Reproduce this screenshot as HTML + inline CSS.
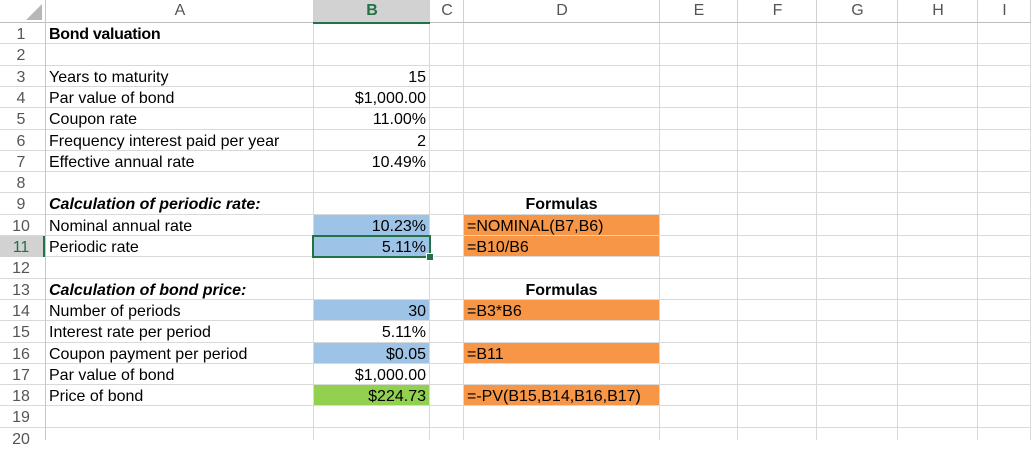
<!DOCTYPE html>
<html><head><meta charset="utf-8"><style>
body{margin:0;width:1031px;height:440px;overflow:hidden;background:#fff;font-family:"Liberation Sans",Arial,sans-serif;position:relative}
.c{position:absolute;box-sizing:border-box;font-size:16px;color:#000;white-space:nowrap;line-height:21px;overflow:visible}
.h{position:absolute;box-sizing:border-box;color:#555;font-size:16px;text-align:center}
.vl{position:absolute;top:0;width:1px;height:440px;background:#d9d9d9}
.hl{position:absolute;left:0;height:1px;width:1031px;background:#d9d9d9}
</style></head><body>
<div id="g"></div>
<script>
var g=document.getElementById('g'),H='';
var cols=[46,314,430,464,660,738,817,898,978,1031],names='ABCDEFGHI';
function rt(r){return 23+(r-1)*21.3;}
function fill(col,r,color){H+='<div style="position:absolute;left:'+cols[col]+'px;top:'+(rt(r))+'px;width:'+(cols[col+1]-cols[col])+'px;height:21.3px;background:'+color+'"></div>';}
var B='#9dc3e6',O='#f79646',G='#92d050';
fill(1,10,B);fill(1,11,B);fill(1,14,B);fill(1,16,B);fill(1,18,G);
fill(3,10,O);fill(3,11,O);fill(3,14,O);fill(3,16,O);fill(3,18,O);
for(var i=0;i<cols.length;i++)H+='<div class="vl" style="left:'+(cols[i]-1)+'px"></div>';
for(var r=1;r<=20;r++)H+='<div class="hl" style="top:'+(rt(r)-1)+'px"></div>';
H+='<div style="position:absolute;left:0;top:0;width:1031px;height:22px;background:#fff;border-bottom:1px solid #bdbdbd"></div>';
H+='<div style="position:absolute;left:0;top:0;width:45px;height:440px;border-right:1px solid #c8c8c8"></div>';
H+='<svg style="position:absolute;left:26px;top:4px" width="16" height="16"><polygon points="16,0 16,16 0,16" fill="#b7b7b7"/></svg>';
H+='<div style="position:absolute;left:313px;top:0;width:117px;height:22px;background:#d2d2d2;border-bottom:2px solid #217346"></div>';
for(var i=0;i<9;i++){H+='<div class="h" style="left:'+cols[i]+'px;top:2px;width:'+(cols[i+1]-cols[i])+'px;'+(i==1?'color:#217346;font-weight:bold':'')+'">'+names[i]+'</div>';H+='<div style="position:absolute;left:'+(cols[i+1]-1)+'px;top:0;width:1px;height:22px;background:#d0d0d0"></div>';}
H+='<div style="position:absolute;left:0;top:'+rt(11)+'px;width:45px;height:21px;background:#d2d2d2;border-right:2px solid #217346;box-sizing:border-box"></div>';
for(var r=1;r<=20;r++)H+='<div class="h" style="left:0;top:'+(rt(r)+1)+'px;width:42px;line-height:21px;'+(r==11?'color:#217346;':'')+'">'+r+'</div>';
function t(col,r,txt,st){var w=cols[col+1]-cols[col];H+='<div class="c" style="left:'+(cols[col]+3)+'px;top:'+(rt(r)+1)+'px;width:'+(w-7)+'px;'+(st||'')+'">'+txt+'</div>';}
var R='text-align:right;';
t(0,1,'Bond valuation','font-weight:bold;letter-spacing:-0.3px');
t(0,3,'Years to maturity');t(1,3,'15',R);
t(0,4,'Par value of bond');t(1,4,'$1,000.00',R);
t(0,5,'Coupon rate');t(1,5,'11.00%',R);
t(0,6,'Frequency interest paid per year');t(1,6,'2',R);
t(0,7,'Effective annual rate');t(1,7,'10.49%',R);
t(0,9,'Calculation of periodic rate:','font-weight:bold;font-style:italic');
t(3,9,'Formulas','font-weight:bold;text-align:center');
t(0,10,'Nominal annual rate');t(1,10,'10.23%',R);t(3,10,'=NOMINAL(B7,B6)');
t(0,11,'Periodic rate');t(1,11,'5.11%',R);t(3,11,'=B10/B6');
t(0,13,'Calculation of bond price:','font-weight:bold;font-style:italic');
t(3,13,'Formulas','font-weight:bold;text-align:center');
t(0,14,'Number of periods');t(1,14,'30',R);t(3,14,'=B3*B6');
t(0,15,'Interest rate per period');t(1,15,'5.11%',R);
t(0,16,'Coupon payment per period');t(1,16,'$0.05',R);t(3,16,'=B11');
t(0,17,'Par value of bond');t(1,17,'$1,000.00',R);
t(0,18,'Price of bond');t(1,18,'$224.73',R);t(3,18,'=-PV(B15,B14,B16,B17)');
H+='<div style="position:absolute;left:312px;top:'+(rt(11)-1)+'px;width:119px;height:23px;border:2px solid #217346;box-sizing:border-box"></div>';
H+='<div style="position:absolute;left:426px;top:'+(rt(12)-4)+'px;width:6px;height:6px;background:#217346;border:1px solid #fff"></div>';
g.innerHTML=H;
</script>
</body></html>
